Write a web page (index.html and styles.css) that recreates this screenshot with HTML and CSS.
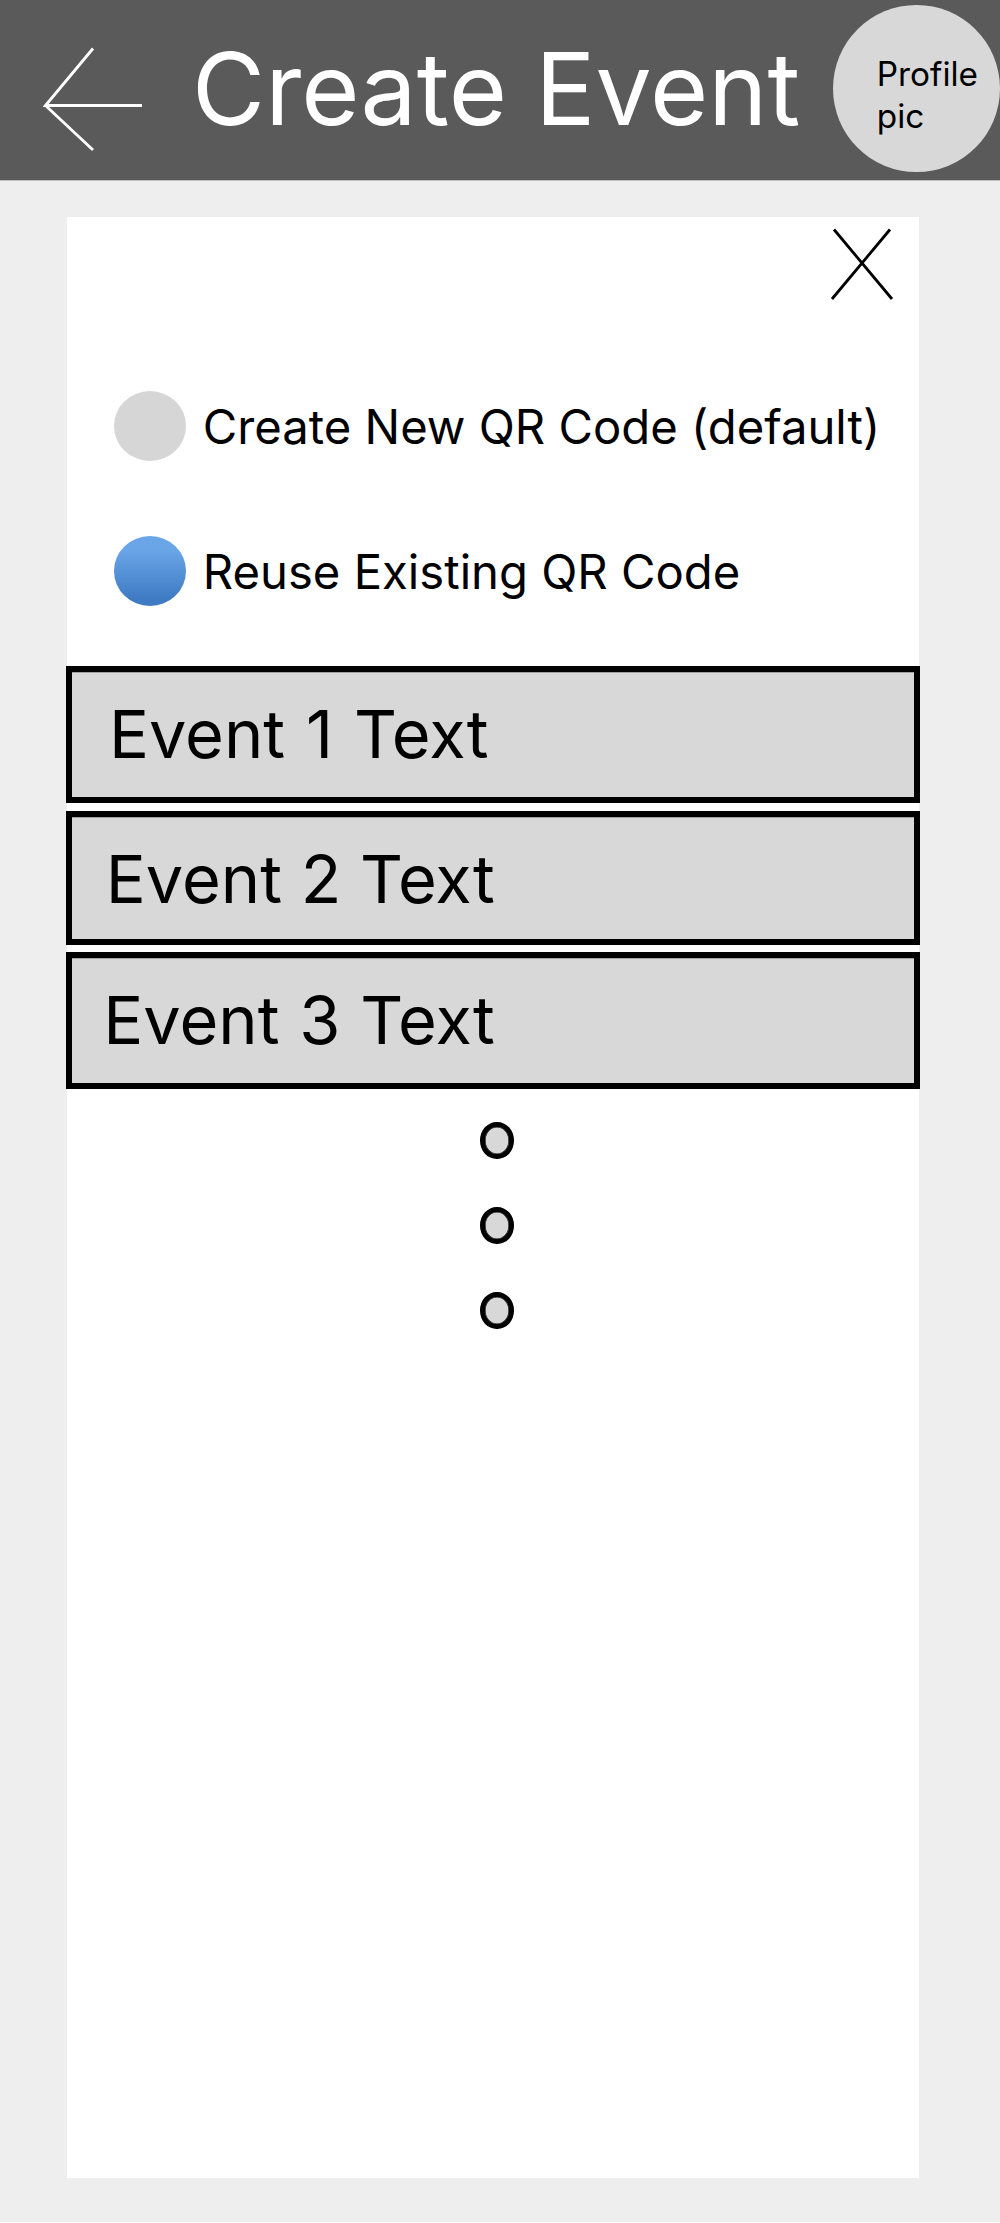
FILE: index.html
```html
<!DOCTYPE html>
<html lang="en">
<head>
<meta charset="utf-8">
<title>Create Event</title>
<link rel="stylesheet" href="styles.css">
</head>
<body>
<div class="screen">
  <header class="topbar">
    <svg class="back" width="100" height="106" viewBox="0 0 100 106" role="img" aria-label="Back">
      <path d="M50 2.5 2.5 59.5H99M2.5 59.5 50 104"/>
    </svg>
    <h1 class="title">Create Event</h1>
    <div class="avatar">Profile<br>pic</div>
  </header>
  <main class="panel">
    <svg class="close" width="64" height="72" viewBox="0 0 64 72" role="img" aria-label="Close">
      <path d="M4 1.5 62 71M60 1.5 2 71"/>
    </svg>
    <div class="options">
      <div class="option"><span class="radio"></span><span class="label">Create New QR Code (default)</span></div>
      <div class="option"><span class="radio radio-on"></span><span class="label">Reuse Existing QR Code</span></div>
    </div>
    <ul class="events">
      <li class="event event-1">Event 1 Text</li>
      <li class="event event-2">Event 2 Text</li>
      <li class="event event-3">Event 3 Text</li>
    </ul>
    <div class="more">
      <span class="dot"></span>
      <span class="dot"></span>
      <span class="dot"></span>
    </div>
  </main>
</div>
</body>
</html>
```
FILE: styles.css
```css
* { box-sizing: border-box; }
body {
  margin: 0;
  background: #fff;
  color: #000;
  font-family: Inter, "Liberation Sans", sans-serif;
}
.screen {
  height: 2222px;
  background: #eee;
}
.topbar {
  display: flex;
  height: 181px;
  padding-left: 43px;
  background: #5a5a5a;
  border-bottom: 1px solid #bdbdbd;
}
.back {
  flex: none;
  margin-top: 46px;
  fill: none;
  stroke: #fff;
  stroke-width: 2.8;
}
.title {
  flex: none;
  width: 641.3px;
  margin: 28px 0 0 49px;
  color: #fff;
  font-size: 100px;
  font-weight: 400;
  line-height: 121px;
  letter-spacing: 0.1px;
  white-space: nowrap;
}
.avatar {
  flex: none;
  width: 166.7px;
  height: 167px;
  margin-top: 5px;
  padding: 49px 0 0 43.5px;
  border-radius: 50%;
  background: #d8d8d8;
  font-size: 33.33px;
  line-height: 41.67px;
}
.panel {
  display: flex;
  flex-direction: column;
  width: 852.4px;
  height: 1961px;
  margin: 36px 0 0 66.7px;
  background: #fff;
}
.close {
  flex: none;
  align-self: flex-end;
  margin: 11px 25px 0 0;
  fill: none;
  stroke: #000;
  stroke-width: 2.8;
}
.options {
  display: flex;
  flex-direction: column;
  gap: 75px;
  margin: 91px 0 0 47.3px;
}
.option {
  display: flex;
  align-items: center;
  gap: 16.8px;
  height: 70px;
}
.radio {
  flex: none;
  width: 72px;
  height: 70px;
  border-radius: 50%;
  background: #d6d6d6;
}
.radio-on {
  background: linear-gradient(#6aa5e8 20%, #3f7bc3 90%);
}
.label {
  padding-top: 2px;
  font-size: 47.22px;
  line-height: 58px;
  white-space: nowrap;
}
.events {
  display: flex;
  flex-direction: column;
  margin: 60px -1px 0;
  padding: 0;
  list-style: none;
}
.event {
  height: 137px;
  padding: 21px 0 0 37.2px;
  border: 6px solid #000;
  background: #d8d8d8;
  box-shadow: inset 0 1px #a0a0a0;
  font-size: 66.67px;
  line-height: 81px;
}
.event-1 { word-spacing: 2.1px; }
.event-2 {
  height: 134px;
  margin: 8px 0 7px;
  padding-left: 34px;
}
.event-3 {
  padding-left: 31.6px;
  word-spacing: 1px;
}
.more {
  display: flex;
  flex-direction: column;
  align-items: center;
  gap: 48.5px;
  margin: 33px 0 0 8px;
}
.dot {
  width: 33.3px;
  height: 36.5px;
  border: 5px solid #000;
  border-radius: 50%;
  background: #d8d8d8;
  box-shadow: inset 0 0 0 0.6px #000;
}
```
